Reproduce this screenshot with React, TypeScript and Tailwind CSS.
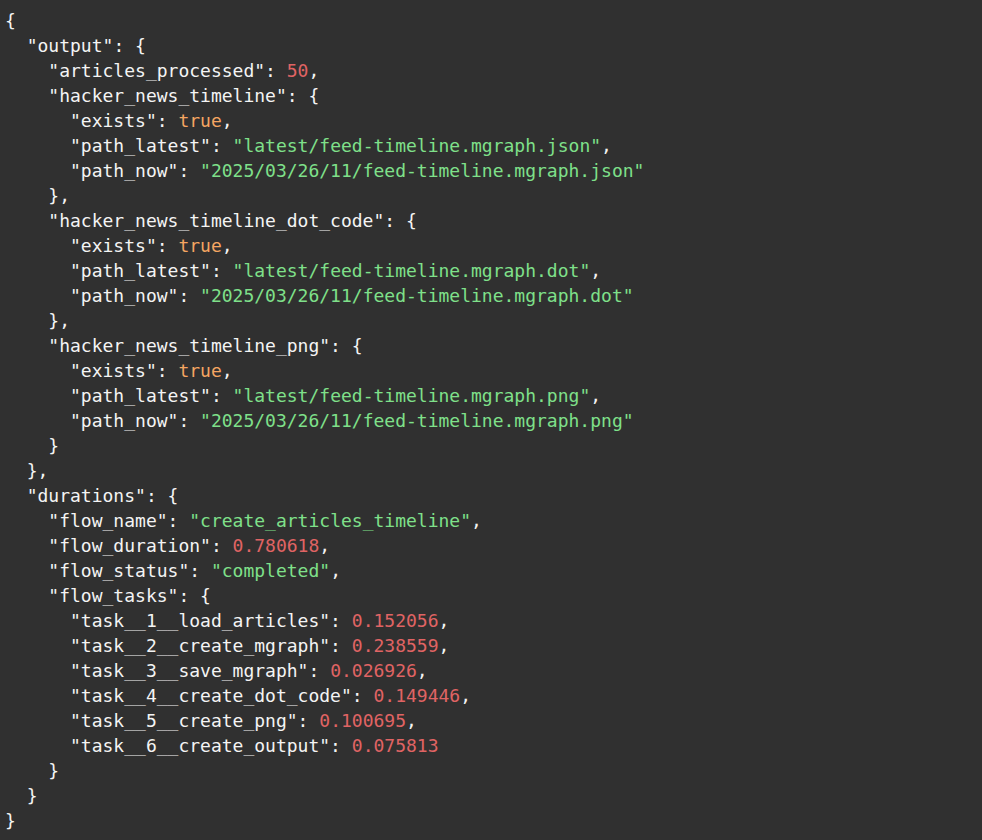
import React from "react";

type Tok = [string, string];
const K = "k", S = "s", N = "n", B = "b", P = "p";

const lines: Tok[][] = [
  [[P, "{"]],
  [[K, '  "output"'], [P, ": {"]],
  [[K, '    "articles_processed"'], [P, ": "], [N, "50"], [P, ","]],
  [[K, '    "hacker_news_timeline"'], [P, ": {"]],
  [[K, '      "exists"'], [P, ": "], [B, "true"], [P, ","]],
  [[K, '      "path_latest"'], [P, ": "], [S, '"latest/feed-timeline.mgraph.json"'], [P, ","]],
  [[K, '      "path_now"'], [P, ": "], [S, '"2025/03/26/11/feed-timeline.mgraph.json"']],
  [[P, "    },"]],
  [[K, '    "hacker_news_timeline_dot_code"'], [P, ": {"]],
  [[K, '      "exists"'], [P, ": "], [B, "true"], [P, ","]],
  [[K, '      "path_latest"'], [P, ": "], [S, '"latest/feed-timeline.mgraph.dot"'], [P, ","]],
  [[K, '      "path_now"'], [P, ": "], [S, '"2025/03/26/11/feed-timeline.mgraph.dot"']],
  [[P, "    },"]],
  [[K, '    "hacker_news_timeline_png"'], [P, ": {"]],
  [[K, '      "exists"'], [P, ": "], [B, "true"], [P, ","]],
  [[K, '      "path_latest"'], [P, ": "], [S, '"latest/feed-timeline.mgraph.png"'], [P, ","]],
  [[K, '      "path_now"'], [P, ": "], [S, '"2025/03/26/11/feed-timeline.mgraph.png"']],
  [[P, "    }"]],
  [[P, "  },"]],
  [[K, '  "durations"'], [P, ": {"]],
  [[K, '    "flow_name"'], [P, ": "], [S, '"create_articles_timeline"'], [P, ","]],
  [[K, '    "flow_duration"'], [P, ": "], [N, "0.780618"], [P, ","]],
  [[K, '    "flow_status"'], [P, ": "], [S, '"completed"'], [P, ","]],
  [[K, '    "flow_tasks"'], [P, ": {"]],
  [[K, '      "task__1__load_articles"'], [P, ": "], [N, "0.152056"], [P, ","]],
  [[K, '      "task__2__create_mgraph"'], [P, ": "], [N, "0.238559"], [P, ","]],
  [[K, '      "task__3__save_mgraph"'], [P, ": "], [N, "0.026926"], [P, ","]],
  [[K, '      "task__4__create_dot_code"'], [P, ": "], [N, "0.149446"], [P, ","]],
  [[K, '      "task__5__create_png"'], [P, ": "], [N, "0.100695"], [P, ","]],
  [[K, '      "task__6__create_output"'], [P, ": "], [N, "0.075813"]],
  [[P, "    }"]],
  [[P, "  }"]],
  [[P, "}"]],
];

function cls(t: string) {
  switch (t) {
    case S:
      return "text-[#7fe08a]";
    case N:
      return "text-[#e06464]";
    case B:
      return "text-[#f5a662]";
    default:
      return "text-[#f4f4f4]";
  }
}

export default function App() {
  return (
    <div className="w-[982px] h-[840px] bg-[#303030] overflow-hidden">
      <pre className="m-0 pl-[5px] pt-[8px] text-[18px] leading-[25px] font-['DejaVu_Sans_Mono','Liberation_Mono',monospace]">
        {lines.map((ln, i) => (
          <div key={i} className="h-[25px] whitespace-pre">
            {ln.map((t, j) => (
              <span key={j} className={cls(t[0])}>
                {t[1]}
              </span>
            ))}
          </div>
        ))}
      </pre>
    </div>
  );
}
